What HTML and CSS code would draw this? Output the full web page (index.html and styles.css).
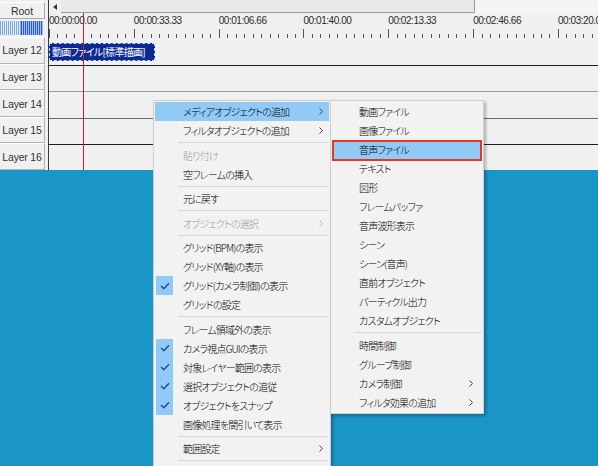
FILE: index.html
```html
<!DOCTYPE html>
<html lang="ja">
<head>
<meta charset="utf-8">
<link rel="stylesheet" href="styles.css">
</head>
<body>
<div class="window">
  <div class="layers">
    <div class="root">Root</div>
    <div class="meter"></div>
    <div class="layer">Layer 12</div>
    <div class="layer">Layer 13</div>
    <div class="layer">Layer 14</div>
    <div class="layer">Layer 15</div>
    <div class="layer">Layer 16</div>
  </div>
  <div class="divider"></div>
  <div class="timeline">
    <div class="scroll">
      <span class="scroll-arrow"><svg width="4" height="6" viewBox="0 0 4 6"><path d="M4 0 L0 3 L4 6 Z" fill="#333"/></svg></span>
      <div class="thumb"></div>
      <div class="track"></div>
    </div>
    <div class="ruler">
      <div class="labels">
        <span class="tlabel">00:00:00.00</span>
        <span class="tlabel">00:00:33.33</span>
        <span class="tlabel">00:01:06.66</span>
        <span class="tlabel">00:01:40.00</span>
        <span class="tlabel">00:02:13.33</span>
        <span class="tlabel">00:02:46.66</span>
        <span class="tlabel">00:03:20.00</span>
      </div>
      <div class="ticks"></div>
    </div>
    <div class="row line-dark"><div class="clip">動画ファイル[標準描画]</div></div>
    <div class="row line-light"></div>
    <div class="row line-mid"></div>
    <div class="row line-dark"></div>
    <div class="row"></div>
    <div class="playhead"></div>
  </div>
</div>

<div class="menu main-menu">
  <div class="item active"><span class="label">メディアオブジェクトの追加</span><span class="chev"><svg width="4" height="7" viewBox="0 0 4 7"><path d="M0.5 0.5 L3.5 3.5 L0.5 6.5" fill="none" stroke="#444" stroke-width="1"/></svg></span></div>
  <div class="item"><span class="label">フィルタオブジェクトの追加</span><span class="chev"><svg width="4" height="7" viewBox="0 0 4 7"><path d="M0.5 0.5 L3.5 3.5 L0.5 6.5" fill="none" stroke="#444" stroke-width="1"/></svg></span></div>
  <div class="sep"></div>
  <div class="item disabled"><span class="label">貼り付け</span></div>
  <div class="item"><span class="label">空フレームの挿入</span></div>
  <div class="sep"></div>
  <div class="item"><span class="label">元に戻す</span></div>
  <div class="sep"></div>
  <div class="item disabled"><span class="label">オブジェクトの選択</span><span class="chev"><svg width="4" height="7" viewBox="0 0 4 7"><path d="M0.5 0.5 L3.5 3.5 L0.5 6.5" fill="none" stroke="#bbb" stroke-width="1"/></svg></span></div>
  <div class="sep"></div>
  <div class="item"><span class="label">グリッド(BPM)の表示</span></div>
  <div class="item"><span class="label">グリッド(XY軸)の表示</span></div>
  <div class="item checked"><span class="check"><svg width="10" height="8" viewBox="0 0 10 8"><path d="M1 4 L3.8 6.8 L9 1.2" fill="none" stroke="#1f4e8c" stroke-width="1.4"/></svg></span><span class="label">グリッド(カメラ制御)の表示</span></div>
  <div class="item"><span class="label">グリッドの設定</span></div>
  <div class="sep"></div>
  <div class="item"><span class="label">フレーム領域外の表示</span></div>
  <div class="item checked"><span class="check"><svg width="10" height="8" viewBox="0 0 10 8"><path d="M1 4 L3.8 6.8 L9 1.2" fill="none" stroke="#1f4e8c" stroke-width="1.4"/></svg></span><span class="label">カメラ視点GUIの表示</span></div>
  <div class="item checked"><span class="check"><svg width="10" height="8" viewBox="0 0 10 8"><path d="M1 4 L3.8 6.8 L9 1.2" fill="none" stroke="#1f4e8c" stroke-width="1.4"/></svg></span><span class="label">対象レイヤー範囲の表示</span></div>
  <div class="item checked"><span class="check"><svg width="10" height="8" viewBox="0 0 10 8"><path d="M1 4 L3.8 6.8 L9 1.2" fill="none" stroke="#1f4e8c" stroke-width="1.4"/></svg></span><span class="label">選択オブジェクトの追従</span></div>
  <div class="item checked"><span class="check"><svg width="10" height="8" viewBox="0 0 10 8"><path d="M1 4 L3.8 6.8 L9 1.2" fill="none" stroke="#1f4e8c" stroke-width="1.4"/></svg></span><span class="label">オブジェクトをスナップ</span></div>
  <div class="item"><span class="label">画像処理を間引いて表示</span></div>
  <div class="sep"></div>
  <div class="item"><span class="label">範囲設定</span><span class="chev"><svg width="4" height="7" viewBox="0 0 4 7"><path d="M0.5 0.5 L3.5 3.5 L0.5 6.5" fill="none" stroke="#444" stroke-width="1"/></svg></span></div>
  <div class="sep"></div>
</div>

<div class="menu sub-menu">
  <div class="item"><span class="label">動画ファイル</span></div>
  <div class="item"><span class="label">画像ファイル</span></div>
  <div class="item active"><span class="label">音声ファイル</span></div>
  <div class="item"><span class="label">テキスト</span></div>
  <div class="item"><span class="label">図形</span></div>
  <div class="item"><span class="label">フレームバッファ</span></div>
  <div class="item"><span class="label">音声波形表示</span></div>
  <div class="item"><span class="label">シーン</span></div>
  <div class="item"><span class="label">シーン(音声)</span></div>
  <div class="item"><span class="label">直前オブジェクト</span></div>
  <div class="item"><span class="label">パーティクル出力</span></div>
  <div class="item"><span class="label">カスタムオブジェクト</span></div>
  <div class="sep"></div>
  <div class="item"><span class="label">時間制御</span></div>
  <div class="item"><span class="label">グループ制御</span></div>
  <div class="item"><span class="label">カメラ制御</span><span class="chev"><svg width="4" height="7" viewBox="0 0 4 7"><path d="M0.5 0.5 L3.5 3.5 L0.5 6.5" fill="none" stroke="#444" stroke-width="1"/></svg></span></div>
  <div class="item"><span class="label">フィルタ効果の追加</span><span class="chev"><svg width="4" height="7" viewBox="0 0 4 7"><path d="M0.5 0.5 L3.5 3.5 L0.5 6.5" fill="none" stroke="#444" stroke-width="1"/></svg></span></div>
</div>

<div class="mark"></div>
</body>
</html>
```

FILE: styles.css
```css
html, body {
  margin: 0;
  padding: 0;
}
body {
  width: 598px;
  height: 466px;
  overflow: hidden;
  position: relative;
  background: #1a95c8;
  font-family: "Liberation Sans", Arial, sans-serif;
}

/* ---------- timeline window ---------- */
.window {
  height: 170px;
  background: #f0f0f0;
  display: flex;
  overflow: hidden;
}
.layers {
  width: 45px;
  flex: none;
  display: flex;
  flex-direction: column;
}
.root {
  margin-top: 2px;
  height: 17px;
  border-top: 1px solid #fff;
  border-bottom: 1px solid #a8a8a8;
  border-right: 1px solid #a8a8a8;
  font-size: 10.5px;
  color: #333;
  display: flex;
  align-items: center;
  justify-content: center;
}
.meter {
  margin-top: 2px;
  width: 43px;
  height: 15px;
  background:
    repeating-linear-gradient(90deg, #2f5fc4 0 1px, #9fbde8 1px 2px) 21px 0 / 22px 100% no-repeat,
    repeating-linear-gradient(90deg, #7ea9e2 0 1px, #e4ecf8 1px 2px) 0 0 / 21px 100% no-repeat;
}
.layer {
  height: 24.6px;
  flex: none;
  border-top: 1px solid #fff;
  border-bottom: 1px solid #b4b4b4;
  border-right: 1px solid #b4b4b4;
  font-size: 10.5px;
  letter-spacing: -0.2px;
  color: #333;
  display: flex;
  align-items: center;
  justify-content: center;
}
.layers .meter + .layer {
  margin-top: 2px;
}
.divider {
  width: 3px;
  flex: none;
  border-right: 1px solid #3a3a3a;
}
.timeline {
  flex: 1;
  position: relative;
  display: flex;
  flex-direction: column;
  overflow: hidden;
}
.scroll {
  height: 13px;
  flex: none;
  display: flex;
  align-items: stretch;
}
.scroll-arrow {
  width: 12px;
  display: flex;
  align-items: center;
  justify-content: center;
}
.thumb {
  width: 413px;
  background: #e9e9e9;
  border-bottom: 1px solid #9a9a9a;
  border-right: 1px solid #9a9a9a;
}
.track {
  flex: 1;
  background: #f5f5f5;
}
.ruler {
  height: 26px;
  flex: none;
  position: relative;
  display: flex;
  flex-direction: column;
}
.labels {
  height: 15px;
  display: flex;
  align-items: center;
}
.tlabel {
  width: 84.83px;
  flex: none;
  font-size: 10px;
  letter-spacing: -0.45px;
  color: #2a2a2a;
  white-space: nowrap;
}
.ticks {
  margin-top: 1px;
  height: 9px;
  background-image:
    repeating-linear-gradient(90deg, #555 0 1px, transparent 1px 84.83px),
    repeating-linear-gradient(90deg, #555 0 1px, transparent 1px 8.483px);
  background-size: 100% 9px, 100% 4px;
  background-position: 0 0, 0 5px;
  background-repeat: no-repeat;
}
.row {
  height: 26.6px;
  flex: none;
  box-sizing: border-box;
  position: relative;
  display: flex;
  align-items: center;
}
.line-dark { border-bottom: 1px solid #1e1e1e; }
.line-light { border-bottom: 1px solid #9a9a9a; }
.line-mid { border-bottom: 1px solid #6a6a6a; }
.clip {
  margin-left: 0;
  width: 106px;
  height: 18px;
  box-sizing: border-box;
  background: #0c2a94;
  border: 1px dashed #c9d4f4;
  color: #fff;
  font-family: "Noto Sans CJK JP", sans-serif;
  font-feature-settings: "palt";
  font-size: 10px;
  letter-spacing: -0.7px;
  line-height: 16px;
  padding-left: 2px;
  white-space: nowrap;
  overflow: hidden;
}
.playhead {
  position: absolute;
  left: 34px;
  top: 13px;
  bottom: 0;
  width: 1px;
  background: #b8252a;
}

/* ---------- context menus ---------- */
.menu {
  position: absolute;
  background: #f2f2f2;
  border: 1px solid #cfcfcf;
  padding: 1px;
  box-shadow: 2px 2px 3px rgba(0, 0, 0, 0.28);
  font-family: "Noto Sans CJK JP", sans-serif;
  font-feature-settings: "palt";
  font-size: 10px;
  font-weight: 300;
  letter-spacing: -0.8px;
  color: #000;
}
.main-menu {
  left: 153px;
  top: 100px;
  width: 174px;
  height: 380px;
}
.sub-menu {
  left: 330px;
  top: 100px;
  width: 150px;
}
.item {
  height: 19px;
  position: relative;
  display: flex;
  align-items: center;
  white-space: nowrap;
}
.main-menu .item { padding-left: 28px; }
.sub-menu .item { padding-left: 27px; }
.item.active { background: #91c9f7; }
.item.disabled { color: #9c9c9c; }
.check {
  position: absolute;
  left: 1px;
  top: 0;
  width: 17px;
  height: 19px;
  background: #91c9f7;
  display: flex;
  align-items: center;
  justify-content: center;
}
.chev {
  position: absolute;
  right: 6px;
  top: 6px;
  display: flex;
}
.sub-menu .chev { right: 9px; }
.sep {
  height: 5.5px;
  position: relative;
}
.sep::after {
  content: "";
  position: absolute;
  left: 23px;
  right: 1px;
  top: 2px;
  height: 1px;
  background: #d5d5d5;
}
.mark {
  position: absolute;
  left: 332px;
  top: 140px;
  width: 150px;
  height: 21px;
  box-sizing: border-box;
  border: 2px solid #e6381f;
}
```
